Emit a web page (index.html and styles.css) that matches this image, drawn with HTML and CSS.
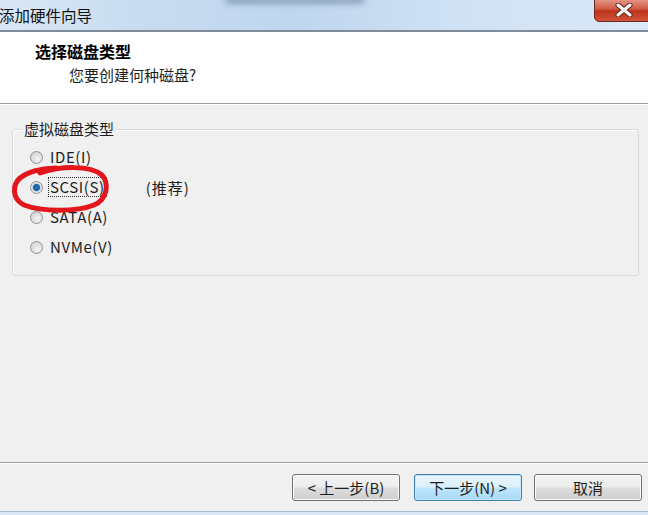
FILE: index.html
```html
<!DOCTYPE html>
<html lang="zh-CN">

<head>
    <meta charset="UTF-8">
    <meta name="viewport" content="width=device-width, initial-scale=1.0">
    <title>添加硬件向导</title>
    <link rel="stylesheet" href="styles.css">
</head>

<body>
    <div class="window">
        <div class="titlebar">
            <span class="titlebar__text">添加硬件向导</span>
            <span class="titlebar__blur"></span>
            <div class="close-btn">
                <svg width="22" height="14" viewBox="0 0 22 14">
                    <path d="M5 2 L17 12 M17 2 L5 12" stroke="#5a2a22" stroke-width="5" stroke-linecap="round" />
                    <path d="M5 2 L17 12 M17 2 L5 12" stroke="#ffffff" stroke-width="3" stroke-linecap="round" />
                </svg>
            </div>
        </div>

        <div class="header">
            <h1 class="header__title">选择磁盘类型</h1>
            <div class="header__sub">您要创建何种磁盘?</div>
        </div>

        <div class="content">
            <div class="group">
                <div class="group__title">虚拟磁盘类型</div>
                <div class="group__options">
                    <div class="radio-row">
                        <span class="radio"></span>
                        <span class="radio-label">IDE(I)</span>
                    </div>
                    <div class="radio-row">
                        <span class="radio radio--checked"></span>
                        <span class="radio-label radio-label--focus">SCSI(S)</span>
                        <span class="recommend">(推荐)</span>
                    </div>
                    <div class="radio-row">
                        <span class="radio"></span>
                        <span class="radio-label">SATA(A)</span>
                    </div>
                    <div class="radio-row">
                        <span class="radio"></span>
                        <span class="radio-label">NVMe(V)</span>
                    </div>
                </div>
            </div>
        </div>

        <div class="footer">
            <button class="btn">&lt; 上一步(B)</button>
            <button class="btn btn--default">下一步(N) &gt;</button>
            <button class="btn btn--cancel">取消</button>
        </div>
        <div class="bottom-edge"></div>
    </div>

    <!-- red hand-drawn mark over the SCSI option -->
    <svg class="annotation" width="104" height="60" viewBox="8 158 104 60">
        <path d="M40 173 C60 166, 90 165, 102 175 C109 183, 108 199, 94 205 C77 212, 42 212, 24 205 C12 199, 12 185, 20 178 C29 171, 40 169, 56 168"
            fill="none" stroke="#e3161b" stroke-width="5" stroke-linecap="round" />
    </svg>
</body>

</html>
```

FILE: styles.css
```css
html,
body {
    margin: 0;
    width: 648px;
    height: 515px;
    overflow: hidden;
}

body {
    position: relative;
    font-family: "Noto Sans CJK SC", "Noto Sans", sans-serif;
    font-size: 15px;
    color: #1e1e1e;
    background: #f0f0f0;
}

.window {
    display: flex;
    flex-direction: column;
    height: 515px;
}

.titlebar {
    position: relative;
    height: 30px;
    display: flex;
    align-items: center;
    background: linear-gradient(90deg, #d9e7f5 0%, #c9ddf1 20%, #bfd6ee 45%, #cfe1f4 70%, #dbe9f8 100%);
    border-bottom: 2px solid #7f8b99;
}

.titlebar__text {
    margin-left: -1px;
    color: #101010;
    font-size: 15.5px;
    line-height: 20px;
}

.titlebar__blur {
    position: absolute;
    left: 225px;
    top: -4px;
    width: 140px;
    height: 8px;
    background: #7f96b0;
    border-radius: 4px;
    filter: blur(3px);
    opacity: 0.8;
}

.close-btn {
    position: absolute;
    right: -6px;
    top: -2px;
    width: 58px;
    height: 22px;
    display: flex;
    align-items: center;
    justify-content: center;
    border: 1px solid #6f2a1f;
    border-radius: 0 0 5px 5px;
    background: linear-gradient(180deg, #e59a88 0%, #d05a44 45%, #bb3319 55%, #d1543a 100%);
}

.header {
    height: 71px;
    background: #ffffff;
    border-bottom: 1px solid #a0a0a0;
    box-shadow: 0 1px 0 #ffffff;
}

.header__title {
    margin: 9px 0 0 35px;
    font-size: 16px;
    font-weight: bold;
    line-height: 20px;
    color: #000000;
}

.header__sub {
    margin: 4px 0 0 69px;
    line-height: 20px;
}

.content {
    flex: 1;
    padding: 25px 9px 0 12px;
    border-bottom: 1px solid #a0a0a0;
    box-shadow: 0 1px 0 #ffffff;
}

.group {
    border: 1px solid #d5dbe1;
    border-radius: 3px;
    box-shadow: inset 1px 1px 0 #ffffff;
    padding: 0 0 13px 17px;
}

.group__title {
    width: fit-content;
    margin: -10px 0 0 -8px;
    padding: 0 2px;
    line-height: 18px;
    background: #f0f0f0;
}

.group__options {
    margin-top: 4px;
}

.radio-row {
    display: flex;
    align-items: center;
    height: 30px;
}

.radio {
    width: 11px;
    height: 11px;
    border: 1px solid #8f9193;
    border-radius: 50%;
    background: radial-gradient(circle at 60% 65%, #f4f4f4 0%, #dcdcdc 60%, #c8c8c8 100%);
    margin-right: 6px;
    flex-shrink: 0;
}

.radio--checked {
    background: radial-gradient(circle at 50% 50%, #2a6fb5 0, #1d5c9e 3px, #b9d3ea 4px, #e8e8e8 5px, #d6d6d6 100%);
}

.radio-label {
    padding: 0 1px;
    line-height: 18px;
    letter-spacing: 0.6px;
}

.radio-label--focus {
    outline: 1px dotted #333333;
}

.recommend {
    margin-left: 40px;
    letter-spacing: 1px;
}

.footer {
    height: 48px;
    display: flex;
    align-items: center;
    justify-content: flex-end;
    gap: 14px;
    padding-right: 6px;
}

.btn {
    width: 108px;
    height: 27px;
    font-family: inherit;
    font-size: 15px;
    color: #1e1e1e;
    border: 1px solid #707070;
    border-radius: 3px;
    background: linear-gradient(180deg, #f4f4f4 0%, #ececec 48%, #dddddd 52%, #cfcfcf 100%);
    box-shadow: inset 0 0 0 1px #fbfbfb;
    padding: 0;
}

.btn--default {
    border-color: #3c7fb1;
    background: linear-gradient(180deg, #eaf6fd 0%, #d9f0fc 48%, #bee6fd 52%, #a7d9f5 100%);
    box-shadow: inset 0 0 0 1px #c7e6f8;
}

.btn--cancel {
    margin-left: -2px;
}

.bottom-edge {
    height: 3px;
    border-top: 1px solid #a9b8c9;
    background: #dce8f5;
}

.annotation {
    position: absolute;
    left: 8px;
    top: 158px;
    pointer-events: none;
}
```
